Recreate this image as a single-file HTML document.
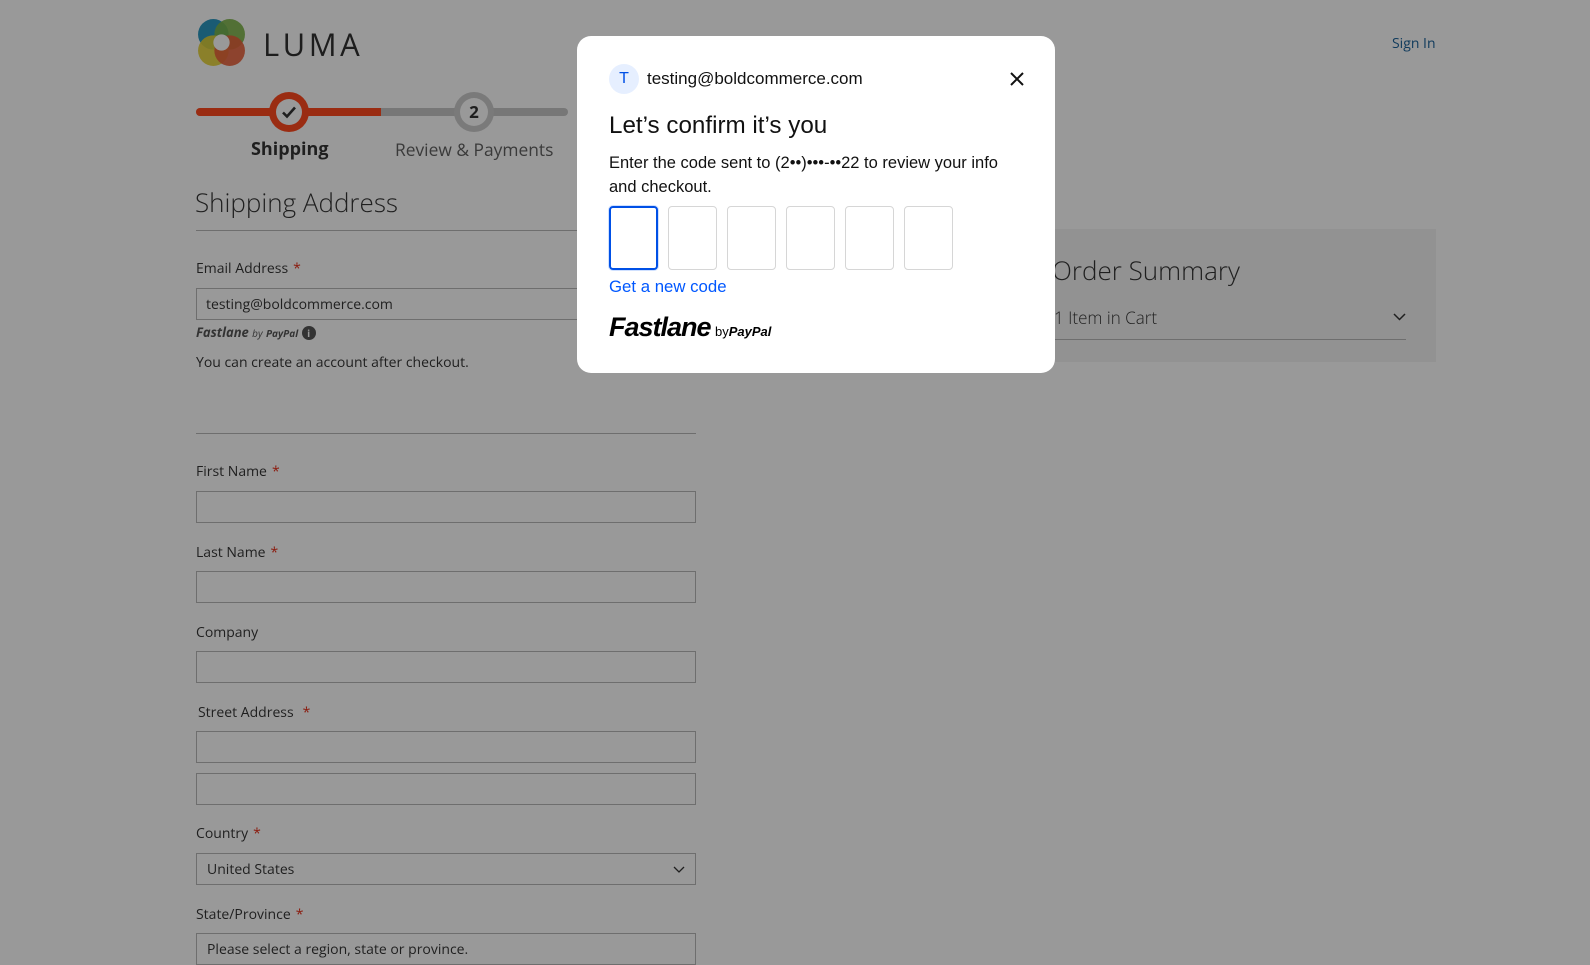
<!DOCTYPE html>
<html><head><meta charset="utf-8"><style>
*{box-sizing:border-box;margin:0;padding:0}
body{width:1590px;height:948px;overflow:hidden;background:#999;font-family:"Open Sans","Liberation Sans",sans-serif;color:#1f1f1f;position:relative}
.a{position:absolute}
.lbl{position:absolute;left:196px;font-size:14px;color:#1f1f1f}
.lbl i{color:#8b1a0d;font-style:normal;margin-left:5px}
.inp{position:absolute;left:196px;width:500px;height:32px;border:1px solid #6e6e6e;background:#999}
.box{position:absolute;top:206px;width:49px;height:64px;border:1px solid #d6d6d6;border-radius:4px}
</style></head><body>
<svg class="a" style="left:196px;top:17px" width="51" height="51" viewBox="0 0 50 50">
<circle cx="17" cy="17" r="15" fill="#1a5b73"/><circle cx="33" cy="17" r="15" fill="#4a6b2a" opacity=".9"/>
<circle cx="17" cy="33" r="15" fill="#8a7d1e" opacity=".9"/><circle cx="33" cy="33" r="15" fill="#8c3a22" opacity=".9"/>
<circle cx="25" cy="25" r="8" fill="#999"/></svg>
<div class="a" style="left:263px;top:24px;font-size:31px;letter-spacing:3.5px;color:#1d1d1d;font-weight:500">LUMA</div>
<div class="a" style="left:1392px;top:34px;font-size:14px;color:#0f3a5c">Sign In</div>
<div class="a" style="left:196px;top:108px;width:372px;height:8px;border-radius:4px;background:#777"></div>
<div class="a" style="left:196px;top:108px;width:185px;height:8px;border-radius:4px 0 0 4px;background:#9a2c12"></div>
<div class="a" style="left:269px;top:92px;width:40px;height:40px;border-radius:50%;background:#9a2c12"></div>
<div class="a" style="left:276px;top:99px;width:26px;height:26px;border-radius:50%;background:#999"></div>
<svg class="a" style="left:281px;top:104px" width="16" height="16"><path d="M2 8.5L6 12.5L14 3.5" stroke="#1f1f1f" stroke-width="2.6" fill="none"/></svg>
<div class="a" style="left:454px;top:92px;width:40px;height:40px;border-radius:50%;background:#7a7a7a"></div>
<div class="a" style="left:460px;top:98px;width:28px;height:28px;border-radius:50%;background:#999;text-align:center;line-height:28px;font-size:17px;font-weight:bold">2</div>
<div class="a" style="left:251px;top:137px;font-size:18px;font-weight:bold">Shipping</div>
<div class="a" style="left:395px;top:138px;font-size:17.4px;color:#3a3a3a">Review &amp; Payments</div>
<div class="a" style="left:195px;top:184px;font-size:26px;font-weight:300">Shipping Address</div>
<div class="a" style="left:196px;top:230px;width:400px;height:1px;background:#6e6e6e"></div>
<div class="lbl" style="top:259px">Email Address<i>*</i></div>
<div class="inp" style="top:288px;width:400px;padding:6px 9px;font-size:14px">testing@boldcommerce.com</div>
<div class="a" style="left:196px;top:323px;font-size:13px;font-weight:bold;font-style:italic;color:#333">Fastlane <span style="font-size:10px;font-weight:normal">by</span> <span style="font-size:10px">PayPal</span> <span style="display:inline-block;width:14px;height:14px;border-radius:50%;background:#333;color:#999;font-size:10px;text-align:center;line-height:14px;font-style:normal">i</span></div>
<div class="a" style="left:196px;top:353px;font-size:14px">You can create an account after checkout.</div>
<div class="a" style="left:196px;top:433px;width:500px;height:1px;background:#6e6e6e"></div>
<div class="lbl" style="top:462px">First Name<i>*</i></div><div class="inp" style="top:491px"></div>
<div class="lbl" style="top:543px">Last Name<i>*</i></div><div class="inp" style="top:571px"></div>
<div class="lbl" style="top:623px">Company</div><div class="inp" style="top:651px"></div>
<div class="lbl" style="top:703px;left:198px">Street Address<i style="margin-left:9px">*</i></div><div class="inp" style="top:731px"></div><div class="inp" style="top:773px"></div>
<div class="lbl" style="top:824px">Country<i>*</i></div><div class="inp" style="top:853px;padding:6px 10px;font-size:14px">United States<svg style="position:absolute;right:10px;top:12px" width="12" height="8"><path d="M1 1L6 6L11 1" stroke="#1f1f1f" stroke-width="1.3" fill="none"/></svg></div>
<div class="lbl" style="top:905px">State/Province<i>*</i></div><div class="inp" style="top:933px;padding:6px 10px;font-size:14px">Please select a region, state or province.</div>
<div class="a" style="left:1040px;top:229px;width:396px;height:133px;background:#929292"></div>
<div class="a" style="left:1052px;top:252px;font-size:26px;font-weight:300">Order Summary</div>
<div class="a" style="left:1054px;top:306px;font-size:17px;font-weight:300">1 Item in Cart</div>
<svg class="a" style="left:1393px;top:313px" width="13" height="8"><path d="M1 1L6.5 6.5L12 1" stroke="#1f1f1f" stroke-width="1.5" fill="none"/></svg>
<div class="a" style="left:1054px;top:339px;width:352px;height:1px;background:#6e6e6e"></div>
<div class="a" style="left:577px;top:36px;width:478px;height:337px;background:#fff;border-radius:14px"></div>
<div class="a" style="left:609px;top:64px;width:30px;height:30px;border-radius:50%;background:#e6efff;color:#0050e6;text-align:center;line-height:30px;font-size:16px;font-family:'Liberation Sans',sans-serif">T</div>
<div class="a" style="left:647px;top:69px;font-size:17px;font-family:'Liberation Sans',sans-serif;color:#111">testing@boldcommerce.com</div>
<svg class="a" style="left:1010px;top:72px" width="14" height="14"><path d="M1 1L13 13M13 1L1 13" stroke="#111" stroke-width="2"/></svg>
<div class="a" style="left:609px;top:112px;font-size:24.2px;font-family:'Liberation Sans',sans-serif;color:#111">Let’s confirm it’s you</div>
<div class="a" style="left:609px;top:152px;width:410px;font-size:16.5px;line-height:23.5px;font-family:'Liberation Sans',sans-serif;color:#111">Enter the code sent to (2••)•••-••22 to review your info and checkout.</div>
<div class="box" style="left:609px;border:2px solid #0050e6;box-shadow:0 0 0 1px #cfe0ff"></div>
<div class="box" style="left:668px"></div><div class="box" style="left:727px"></div><div class="box" style="left:786px"></div><div class="box" style="left:845px"></div><div class="box" style="left:904px"></div>
<div class="a" style="left:609px;top:277px;font-size:16.8px;color:#0057ff;font-family:'Liberation Sans',sans-serif">Get a new code</div>
<div class="a" style="left:609px;top:312px;font-family:'Liberation Sans',sans-serif;color:#000;white-space:nowrap"><span style="font-size:27px;font-weight:bold;font-style:italic;letter-spacing:-1px">Fastlane</span> <span style="font-size:13px">by</span><span style="font-size:13px;font-weight:bold;font-style:italic">PayPal</span></div>
</body></html>
